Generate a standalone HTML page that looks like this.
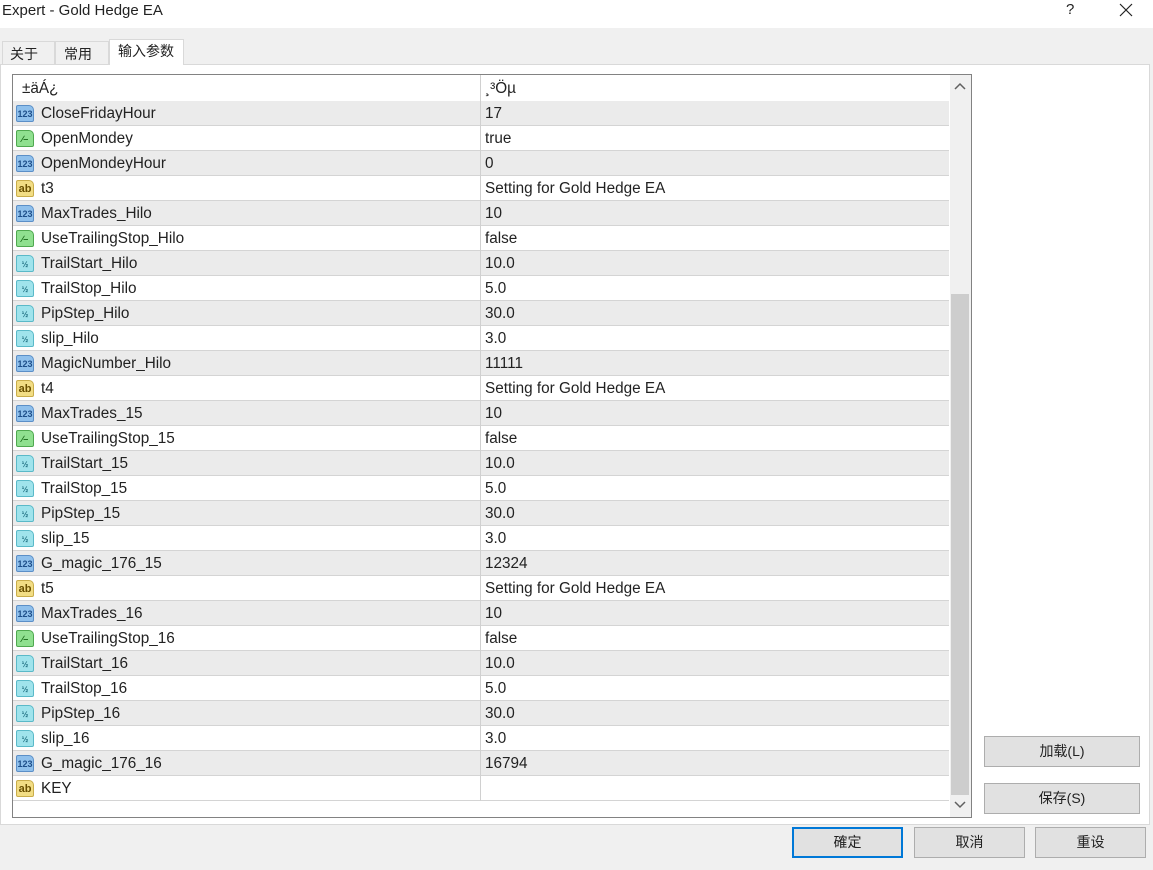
<!DOCTYPE html>
<html><head><meta charset="utf-8"><style>
*{margin:0;padding:0;box-sizing:border-box}
body{width:1153px;height:870px;background:#f0f0f0;position:relative;overflow:hidden;font-family:"Liberation Sans","Noto Sans CJK SC",sans-serif;font-size:15.3px;color:#222}
.a{position:absolute}
.title{left:0;top:0;width:1153px;height:28px;background:#fff}
.btn{position:absolute;background:#e1e1e1;border:1px solid #adadad;text-align:center;font-size:14px;color:#222}
.row{position:absolute;left:13px;width:936px;height:25px;border-bottom:1px solid #d4d4d4}
.row.g{background:#ebebeb}
.row .n{position:absolute;left:28px;top:4px}
.row .v{position:absolute;left:472px;top:4px}
.row .d{position:absolute;left:467px;top:0;width:1px;height:25px;background:#d0d0d0}
.ic{position:absolute;left:3px;top:4px;width:18px;height:17px;border-radius:2px 5px 2px 2px;font-size:9px;font-weight:bold;text-align:center;line-height:17px}
.i1{background:#8fc0ec;color:#1e4f8a;border:1px solid #5b8fc7}
.i2{background:#8fe08f;color:#1a6a1a;border:1px solid #4fa84f}
.i3{background:#f2dd84;color:#6a5000;border:1px solid #c9ad4a;font-size:11px}
.i4{background:#9fe3ec;color:#1d6e80;border:1px solid #5ab9c8;font-size:8px}
</style></head><body>
<div class="a title"></div>
<div class="a" style="left:2px;top:1px;font-size:15px;line-height:19px">Expert - Gold Hedge EA</div>
<div class="a" style="left:1066px;top:1px;font-size:15px">?</div>
<svg class="a" style="left:1119px;top:3px" width="14" height="14"><path d="M1 1L13 13M13 1L1 13" stroke="#222" stroke-width="1.2"/></svg>
<div class="a" style="left:2px;top:41px;width:53px;height:23px;border:1px solid #d9d9d9;border-bottom:none;background:#f0f0f0;font-size:14px;padding:2px 0 0 7px">关于</div>
<div class="a" style="left:55px;top:41px;width:54px;height:23px;border:1px solid #d9d9d9;border-bottom:none;background:#f0f0f0;font-size:14px;padding:2px 0 0 8px">常用</div>
<div class="a" style="left:109px;top:39px;width:75px;height:26px;border:1px solid #d9d9d9;border-bottom:none;background:#fff;font-size:14px;padding:1px 0 0 8px;z-index:2">输入参数</div>
<div class="a" style="left:0;top:64px;width:1150px;height:761px;background:#fff;border:1px solid #d9d9d9"></div>
<div class="a" style="left:12px;top:74px;width:960px;height:744px;border:1px solid #828282;background:#fff"></div>
<div class="a" style="left:22px;top:80px">±äÁ¿</div>
<div class="a" style="left:480px;top:75px;width:1px;height:26px;background:#d0d0d0"></div>
<div class="a" style="left:485px;top:80px">¸³Öµ</div>
<div class="a" style="left:950px;top:75px;width:21px;height:742px;background:#f0f0f0"></div>
<div class="a" style="left:951px;top:294px;width:18px;height:501px;background:#cdcdcd"></div>
<svg class="a" style="left:954px;top:82px" width="12" height="8"><path d="M1 7L6 2L11 7" stroke="#606060" stroke-width="1.5" fill="none"/></svg>
<svg class="a" style="left:954px;top:801px" width="12" height="8"><path d="M1 1L6 6L11 1" stroke="#606060" stroke-width="1.5" fill="none"/></svg>
<div id="rows"></div>
<script>
var R=[["CloseFridayHour","17",1],["OpenMondey","true",2],["OpenMondeyHour","0",1],["t3","Setting for Gold Hedge EA",3],["MaxTrades_Hilo","10",1],["UseTrailingStop_Hilo","false",2],["TrailStart_Hilo","10.0",4],["TrailStop_Hilo","5.0",4],["PipStep_Hilo","30.0",4],["slip_Hilo","3.0",4],["MagicNumber_Hilo","11111",1],["t4","Setting for Gold Hedge EA",3],["MaxTrades_15","10",1],["UseTrailingStop_15","false",2],["TrailStart_15","10.0",4],["TrailStop_15","5.0",4],["PipStep_15","30.0",4],["slip_15","3.0",4],["G_magic_176_15","12324",1],["t5","Setting for Gold Hedge EA",3],["MaxTrades_16","10",1],["UseTrailingStop_16","false",2],["TrailStart_16","10.0",4],["TrailStop_16","5.0",4],["PipStep_16","30.0",4],["slip_16","3.0",4],["G_magic_176_16","16794",1],["KEY","",3]];
var T={1:"123",2:"&#x2215;&#x2013;",3:"ab",4:"½"};var h="";
R.forEach(function(r,i){h+='<div class="row'+(i%2==0?' g':'')+'" style="top:'+(101+i*25)+'px"><div class="ic i'+r[2]+'">'+T[r[2]]+'</div><span class="n">'+r[0]+'</span><div class="d"></div><span class="v">'+r[1]+'</span></div>';});
document.getElementById("rows").innerHTML=h;
</script>
<div class="btn" style="left:984px;top:736px;width:156px;height:31px;line-height:29px">加载(L)</div>
<div class="btn" style="left:984px;top:783px;width:156px;height:31px;line-height:29px">保存(S)</div>
<div class="btn" style="left:792px;top:827px;width:111px;height:31px;line-height:27px;border:2px solid #0078d7">確定</div>
<div class="btn" style="left:914px;top:827px;width:111px;height:31px;line-height:29px">取消</div>
<div class="btn" style="left:1035px;top:827px;width:111px;height:31px;line-height:29px">重设</div>
</body></html>
